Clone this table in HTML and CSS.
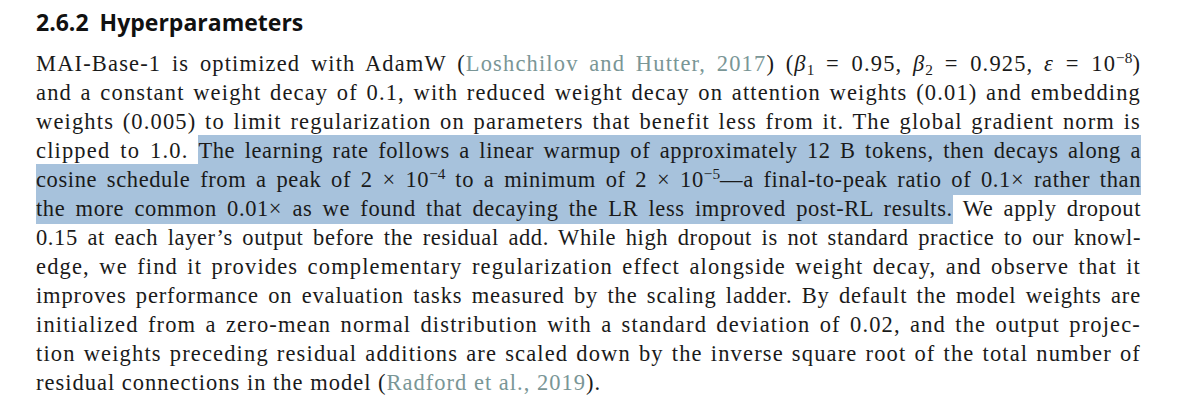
FILE: index.html
```html
<!DOCTYPE html>
<html lang="en">
<head>
<meta charset="utf-8">
<title>2.6.2 Hyperparameters</title>
<link rel="stylesheet" href="styles.css">
</head>
<body>
<section class="section">
  <h2 class="heading"><span class="num">2.6.2</span><span class="title">Hyperparameters</span></h2>
  <div class="para">
    <div class="ln">MAI-Base-1 is optimized with AdamW (<span class="cite">Loshchilov and Hutter, 2017</span>) (<i>β</i><sub>1</sub> <span class="op">=</span> 0.95, <i>β</i><sub>2</sub> <span class="op">=</span> 0.925, <i>ε</i> <span class="op">=</span> 10<sup>−8</sup>)</div>
    <div class="ln">and a constant weight decay of 0.1, with reduced weight decay on attention weights (0.01) and embedding</div>
    <div class="ln">weights (0.005) to limit regularization on parameters that benefit less from it. The global gradient norm is</div>
    <div class="ln">clipped to 1.0. <span class="hl narrow">The learning rate follows a linear warmup of approximately 12 B tokens, then decays along a</span></div>
    <div class="ln narrow"><span class="hl">cosine schedule from a peak of 2 × 10<sup>−4</sup> to a minimum of 2 × 10<sup>−5</sup>—a final-to-peak ratio of 0.1× rather than</span></div>
    <div class="ln narrow"><span class="hl">the more common 0.01× as we found that decaying the LR less improved post-RL results.</span> We apply dropout</div>
    <div class="ln narrow">0.15 at each layer’s output before the residual add. While high dropout is not standard practice to our knowl-</div>
    <div class="ln">edge, we find it provides complementary regularization effect alongside weight decay, and observe that it</div>
    <div class="ln tight">improves performance on evaluation tasks measured by the scaling ladder. By default the model weights are</div>
    <div class="ln">initialized from a zero-mean normal distribution with a standard deviation of 0.02, and the output projec-</div>
    <div class="ln">tion weights preceding residual additions are scaled down by the inverse square root of the total number of</div>
    <div class="ln last">residual connections in the model (<span class="cite">Radford et al., 2019</span>).</div>
  </div>
</section>
</body>
</html>
```
FILE: styles.css
```css
html, body {
  margin: 0;
  padding: 0;
  background: #ffffff;
}

.section {
  padding: 4px 58px 0 36px;
  color: #1a1a1a;
}

.heading {
  margin: 0;
  font-family: "Open Sans", "Noto Sans", sans-serif;
  font-weight: 700;
  font-size: 23px;
  line-height: 36px;
  color: #111;
  display: flex;
  gap: 11px;
}

.para {
  margin-top: 9px;
  font-family: "Liberation Serif", "Times New Roman", serif;
  font-size: 22.5px;
  line-height: 29px;
  letter-spacing: 1.15px;
}

.ln {
  text-align: justify;
  text-align-last: justify;
  white-space: normal;
}

.ln.tight {
  letter-spacing: 0.85px;
}

.ln.last {
  text-align-last: left;
  letter-spacing: 1px;
}

.narrow {
  letter-spacing: 0.6px;
}

.hl {
  background: #a7c2dc;
  padding: 3px 0 3px;
}

.cite {
  color: #7a9696;
}

.op {
  padding: 0 1px;
}

sub, sup {
  font-size: 0.68em;
  line-height: 0;
  letter-spacing: 0;
}

sub {
  vertical-align: -0.25em;
}

sup {
  vertical-align: 0.55em;
}

i {
  font-style: italic;
}
```
